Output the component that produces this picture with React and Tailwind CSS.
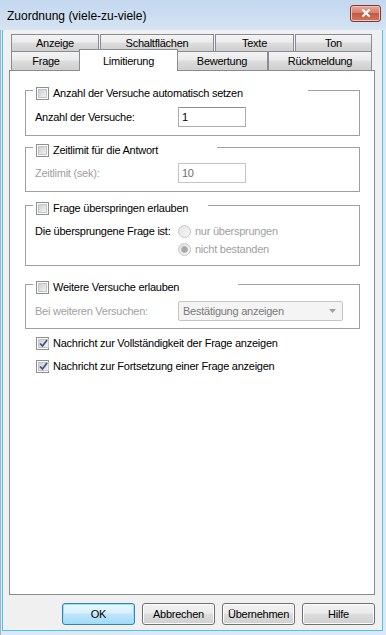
import { X } from 'lucide-react';

const font = { fontFamily: '"Liberation Sans", Arial, sans-serif' };

const topTabs = [
  { label: 'Anzeige', w: 'w-[88px]' },
  { label: 'Schaltflächen', w: 'w-[114px]' },
  { label: 'Texte', w: 'w-[79px]' },
  { label: 'Ton', w: 'w-[77px]' },
];

const tabBg = 'bg-[linear-gradient(#f3f3f3,#ebebeb_45%,#dddddd_50%,#cfcfcf)]';

function Tab({ label, w }) {
  return (
    <div className={`${w} h-full border-x border-t border-[#898c95] ${tabBg} flex items-center justify-center text-black`}>
      {label}
    </div>
  );
}

function Check({ checked }) {
  return (
    <span className="w-[13px] h-[13px] border border-[#8e8f8f] bg-white p-[1px] flex shrink-0">
      <span className="flex-1 border border-[#c2c5ca] bg-[linear-gradient(135deg,#cbced3,#f3f3f3)] flex items-center justify-center">
        {checked && (
          <svg width="9" height="9" viewBox="0 0 9 9" className="-mt-[1px]">
            <path d="M1 4.5 L3.5 7 L8 1" fill="none" stroke="#3d5185" strokeWidth="1.7" />
          </svg>
        )}
      </span>
    </span>
  );
}

function Radio({ selected }) {
  return (
    <span className="w-[13px] h-[13px] rounded-full border border-[#c5c5c5] bg-[linear-gradient(135deg,#e4e4e4,#f7f7f7)] flex items-center justify-center shrink-0">
      {selected && <span className="w-[7px] h-[7px] rounded-full border border-[#b0b0b0] bg-[#a8a8a8]" />}
    </span>
  );
}

function Group({ legendW, label, className, bodyClass, children }) {
  return (
    <div className={`ml-[15px] w-[335px] ${className}`}>
      <div className="flex h-[14px]">
        <div className="w-[8px] mt-[3px] border-t border-l border-[#a0a0a0]" />
        <div className={`${legendW} pl-[3px] flex items-start gap-[4px]`}>
          <Check />
          <span className="leading-[13px]">{label}</span>
        </div>
        <div className="flex-1 mt-[3px] border-t border-r border-[#a0a0a0]" />
      </div>
      <div className={`border-x border-b border-[#a0a0a0] pl-[9px] ${bodyClass}`}>{children}</div>
    </div>
  );
}

function Button({ children, primary }) {
  const look = primary
    ? 'border-[#3c7fb1] bg-[linear-gradient(#eaf6fd,#d9f0fc_45%,#bee6fd_50%,#a7d9f5)] shadow-[inset_0_0_0_1px_#8fe3fb]'
    : 'border-[#707070] bg-[linear-gradient(#f2f2f2,#ebebeb_45%,#dddddd_50%,#cfcfcf)] shadow-[inset_0_0_0_1px_#fcfcfc]';
  return (
    <button className={`w-[73px] h-[22px] rounded-[3px] border ${look} flex items-center justify-center text-black`}>
      {children}
    </button>
  );
}

export default function App() {
  return (
    <div
      style={font}
      className="w-[386px] h-[635px] bg-[#dbe8f5] border-l border-t border-[#9fb3c9] text-[11px] tracking-[-0.25px] text-black flex flex-col"
    >
      <div className="h-[30px] shrink-0 -ml-[1px] -mt-[1px] bg-[linear-gradient(#c3d7ee,#d6e4f3)] flex items-center pl-[7px] pr-[5px]">
        <span className="text-[12px] tracking-normal text-black flex-1 mt-[1px]">Zuordnung (viele-zu-viele)</span>
        <div className="w-[31px] h-[17px] -mt-[4px] rounded-[3px] border border-[#7f3a31] bg-[linear-gradient(#e7a89c,#d7806f_45%,#c45841_50%,#cf7a62)] shadow-[inset_0_0_0_1px_#f1c2b7] flex items-center justify-center">
          <X className="w-[12px] h-[12px] text-white" strokeWidth={4} />
        </div>
      </div>

      <div className="ml-[1px] w-[381px] h-[601px] border-x border-b border-[#45c6f3] bg-[#f0f0f0] flex flex-col pt-[4px] pl-[6px]">
        <div className="w-[366px] flex flex-col">
          <div className="flex gap-[1px] h-[17px] pl-[2px]">
            {topTabs.map((t) => (
              <Tab key={t.label} {...t} />
            ))}
          </div>
          <div className="flex items-start h-[19px] pl-[2px]">
            <Tab label="Frage" w="w-[70px]" />
            <div className="w-[99px] -mx-[2px] -mt-[2px] h-[22px] relative z-10 bg-white border-x border-t border-[#898c95] flex justify-center pt-[3px]">
              Limitierung
            </div>
            <Tab label="Bewertung" w="w-[92px]" />
            <Tab label="Rückmeldung" w="w-[104px]" />
          </div>

          <div className="h-[525px] border border-[#898c95] bg-white pt-[16px]">
            <Group legendW="w-[275px]" label="Anzahl der Versuche automatisch setzen" bodyClass="pt-[6px] pb-[8px]">
              <div className="flex items-center">
                <span className="w-[143px]">Anzahl der Versuche:</span>
                <div className="w-[68px] h-[20px] border border-[#abadb3] border-t-[#8f9299] bg-white flex items-center pl-[3px]">1</div>
              </div>
            </Group>

            <Group legendW="w-[184px]" label="Zeitlimit für die Antwort" className="mt-[8px]" bodyClass="pt-[5px] pb-[8px]">
              <div className="flex items-center">
                <span className="w-[143px] text-[#a0a0a0]">Zeitlimit (sek):</span>
                <div className="w-[68px] h-[20px] border border-[#c2c4c8] bg-white text-[#6d6d6d] flex items-center pl-[3px]">10</div>
              </div>
            </Group>

            <Group legendW="w-[175px]" label="Frage überspringen erlauben" className="mt-[10px]" bodyClass="pt-[9px] pb-[9px]">
              <div className="flex">
                <span className="w-[143px] leading-[13px]">Die übersprungene Frage ist:</span>
                <div className="flex flex-col gap-[5px] text-[#a0a0a0]">
                  <div className="flex items-center gap-[4px] leading-[13px]">
                    <Radio />
                    <span>nur übersprungen</span>
                  </div>
                  <div className="flex items-center gap-[4px] leading-[13px]">
                    <Radio selected />
                    <span>nicht bestanden</span>
                  </div>
                </div>
              </div>
            </Group>

            <Group legendW="w-[205px]" label="Weitere Versuche erlauben" className="mt-[15px]" bodyClass="pt-[6px] pb-[7px]">
              <div className="flex items-center">
                <span className="w-[143px] text-[#a0a0a0]">Bei weiteren Versuchen:</span>
                <div className="w-[165px] h-[20px] rounded-[2px] border border-[#c4c4c4] bg-[#f4f4f4] text-[#7a7a7a] flex items-center pl-[4px] pr-[6px]">
                  <span className="flex-1">Bestätigung anzeigen</span>
                  <svg width="7" height="4" viewBox="0 0 7 4">
                    <path d="M0 0 H7 L3.5 4 Z" fill="#a0a0a0" />
                  </svg>
                </div>
              </div>
            </Group>

            <div className="ml-[26px] mt-[8px] flex flex-col gap-[10px]">
              <div className="flex items-start gap-[4px] leading-[13px]">
                <Check checked />
                <span>Nachricht zur Vollständigkeit der Frage anzeigen</span>
              </div>
              <div className="flex items-start gap-[4px] leading-[13px]">
                <Check checked />
                <span>Nachricht zur Fortsetzung einer Frage anzeigen</span>
              </div>
            </div>
          </div>

          <div className="flex justify-end gap-[7px] mt-[8px]">
            <Button primary>OK</Button>
            <Button>Abbrechen</Button>
            <Button>Übernehmen</Button>
            <Button>Hilfe</Button>
          </div>
        </div>
      </div>
    </div>
  );
}
